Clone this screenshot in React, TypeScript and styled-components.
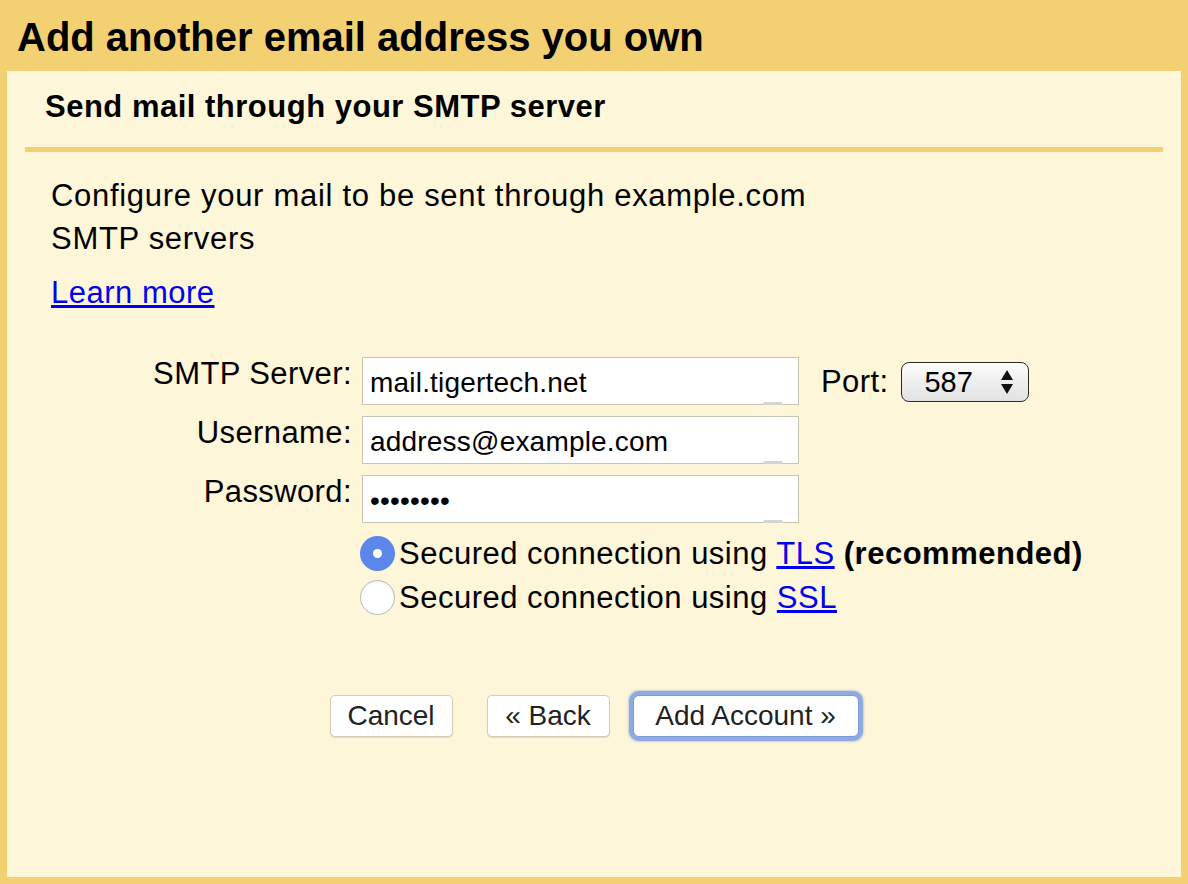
import React from "react";
import styled, { createGlobalStyle } from "styled-components";

const Global = createGlobalStyle`
  html, body { margin: 0; padding: 0; background: #F3D173; }
  body { font-family: "Liberation Sans", Arial, Helvetica, sans-serif; color: #000; }
`;

const Frame = styled.div`
  width: 1188px;
  height: 884px;
  box-sizing: border-box;
  background: #F3D173;
  display: flex;
  flex-direction: column;
  padding: 0 7px 7px 7px;
`;

const Title = styled.h1`
  margin: 0;
  height: 71px;
  box-sizing: border-box;
  padding: 14px 0 0 10px;
  font-size: 40px;
  line-height: 46px;
  font-weight: bold;
`;

const Panel = styled.div`
  flex: 1;
  background: #FEF6D9;
  display: flex;
  flex-direction: column;
`;

const Header = styled.div`
  height: 76px;
  box-sizing: border-box;
  padding: 19px 38px 0;
  font-size: 31px;
  line-height: 34px;
  letter-spacing: 0.5px;
  font-weight: bold;
`;

const Separator = styled.div`
  height: 5px;
  margin: 0 18px;
  background: #F3D173;
`;

const Intro = styled.p`
  margin: 22px 0 0 44px;
  width: 800px;
  font-size: 31px;
  letter-spacing: 0.7px;
  line-height: 43px;
`;

const Link = styled.a`
  color: #0000EE;
  text-decoration: underline;
  cursor: pointer;
`;

const LearnMore = styled.div`
  margin: 11px 0 0 44px;
  font-size: 31px;
  letter-spacing: 0.5px;
  line-height: 43px;
`;

const Form = styled.div`
  margin-top: 43px;
  display: grid;
  grid-template-columns: 345px 437px auto;
  grid-auto-rows: 48px;
  column-gap: 10px;
  row-gap: 11px;
`;

const Label = styled.label`
  justify-self: end;
  align-self: start;
  font-size: 31px;
  letter-spacing: 0.4px;
  line-height: 33px;
`;

const FieldWrap = styled.div`
  position: relative;
  height: 48px;
  &::after {
    content: "";
    position: absolute;
    right: 16px;
    bottom: 0px;
    width: 20px;
    height: 3px;
    border-radius: 2px 2px 0 0;
    background: #d4d4d4;
  }
`;

const Input = styled.input`
  width: 100%;
  height: 48px;
  box-sizing: border-box;
  border: 1px solid #c9c4b2;
  background: #fff;
  padding: 3px 7px 0;
  font-family: "Liberation Sans", Arial, sans-serif;
  font-size: 28px;
  letter-spacing: 0.2px;
  color: #000;
  outline: none;
`;

const PortCell = styled.div`
  display: flex;
  align-items: center;
  gap: 13px;
  margin-left: 12px;
  padding-top: 2px;
  box-sizing: border-box;
  font-size: 31px;
  letter-spacing: 0.4px;
  height: 48px;
`;

const Select = styled.div`
  width: 128px;
  height: 40px;
  box-sizing: border-box;
  border: 1.5px solid #2a2a2a;
  border-radius: 8px;
  background: linear-gradient(#fdfdfd, #ededed 55%, #e2e2e2);
  display: flex;
  align-items: center;
  justify-content: space-between;
  padding: 0 14px 0 22px;
  font-size: 29px;
  letter-spacing: 0;
`;

const Radios = styled.div`
  margin: 13px 0 0 353px;
  display: flex;
  flex-direction: column;
  gap: 9px;
`;

const RadioRow = styled.div`
  display: flex;
  align-items: center;
  gap: 4px;
  font-size: 31px;
  letter-spacing: 0.5px;
  line-height: 35px;
`;

const RadioDot = styled.span<{ $checked?: boolean }>`
  width: 35px;
  height: 35px;
  border-radius: 50%;
  box-sizing: border-box;
  flex: none;
  display: flex;
  align-items: center;
  justify-content: center;
  background: ${(p) => (p.$checked ? "#5B86EA" : "#fff")};
  border: ${(p) => (p.$checked ? "none" : "1.5px solid #b9b9b9")};
  box-shadow: ${(p) => (p.$checked ? "none" : "inset 0 1px 2px rgba(0,0,0,0.08)")};
  &::after {
    content: "";
    display: ${(p) => (p.$checked ? "block" : "none")};
    width: 9px;
    height: 9px;
    border-radius: 50%;
    background: #fff;
  }
`;

const Strong = styled.b`
  font-weight: bold;
`;

const Buttons = styled.div`
  margin-top: 80px;
  display: flex;
  justify-content: center;
  align-items: center;
`;

const Button = styled.button<{ $focused?: boolean; $gap?: number; $w: number }>`
  width: ${(p) => p.$w}px;
  height: 42px;
  box-sizing: border-box;
  padding: 0;
  margin-right: ${(p) => p.$gap ?? 0}px;
  background: #fff;
  border: 1px solid ${(p) => (p.$focused ? "#7f9bd6" : "#d2ccb8")};
  border-radius: ${(p) => (p.$focused ? 6 : 5)}px;
  font-family: "Liberation Sans", Arial, sans-serif;
  font-size: 28px;
  color: #222;
  box-shadow: ${(p) =>
    p.$focused
      ? "0 0 0 4px #8FAADF, 0 0 2px 5px rgba(143,170,223,0.5)"
      : "0 1px 1px rgba(0,0,0,0.12)"};
`;

function Arrows() {
  return (
    <svg width="14" height="26" viewBox="0 0 14 26">
      <polygon points="7,1 13,11 1,11" fill="#111" />
      <polygon points="1,15 13,15 7,25" fill="#111" />
    </svg>
  );
}

export default function App() {
  return (
    <>
      <Global />
      <Frame>
        <Title>Add another email address you own</Title>
        <Panel>
          <Header>Send mail through your SMTP server</Header>
          <Separator />
          <Intro>Configure your mail to be sent through example.com SMTP servers</Intro>
          <LearnMore>
            <Link>Learn more</Link>
          </LearnMore>
          <Form>
            <Label>SMTP Server:</Label>
            <FieldWrap>
              <Input defaultValue="mail.tigertech.net" />
            </FieldWrap>
            <PortCell>
              <span>Port:</span>
              <Select>
                <span>587</span>
                <Arrows />
              </Select>
            </PortCell>
            <Label>Username:</Label>
            <FieldWrap>
              <Input defaultValue="address@example.com" />
            </FieldWrap>
            <span />
            <Label>Password:</Label>
            <FieldWrap>
              <Input type="password" defaultValue="password" />
            </FieldWrap>
            <span />
          </Form>
          <Radios>
            <RadioRow>
              <RadioDot $checked />
              <span>
                Secured connection using <Link>TLS</Link> <Strong>(recommended)</Strong>
              </span>
            </RadioRow>
            <RadioRow>
              <RadioDot />
              <span>
                Secured connection using <Link>SSL</Link>
              </span>
            </RadioRow>
          </Radios>
          <Buttons>
            <Button $w={123} $gap={34}>Cancel</Button>
            <Button $w={123} $gap={23}>« Back</Button>
            <Button $w={226} $focused>Add Account »</Button>
          </Buttons>
        </Panel>
      </Frame>
    </>
  );
}
